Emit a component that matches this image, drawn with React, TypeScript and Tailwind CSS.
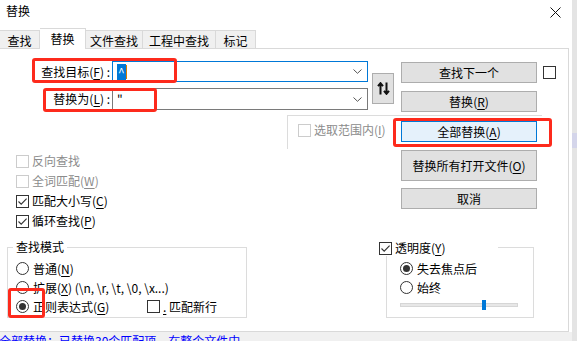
import React from "react";

const Acc: React.FC<{ k: string }> = ({ k }) => (
	<span>
		(<span className="underline decoration-1 underline-offset-[2px]">{k}</span>)
	</span>
);

const Box: React.FC<{ checked?: boolean; disabled?: boolean }> = ({ checked, disabled }) => (
	<span
		className={`flex h-[13px] w-[13px] shrink-0 items-center justify-center border bg-white ${
			disabled ? "border-[#cccccc]" : "border-[#333333]"
		}`}
	>
		{checked && (
			<svg width="11" height="11" viewBox="0 0 11 11">
				<path d="M1.5 5.5 L4.2 8.2 L9.6 2.6" fill="none" stroke="#333" strokeWidth="1.1" />
			</svg>
		)}
	</span>
);

const Radio: React.FC<{ checked?: boolean }> = ({ checked }) => (
	<span className="flex h-[13px] w-[13px] shrink-0 items-center justify-center rounded-full border border-[#333333] bg-white">
		{checked && <span className="h-[7px] w-[7px] rounded-full bg-[#333333]" />}
	</span>
);

const Chevron = () => (
	<svg width="9" height="5" viewBox="0 0 9 5" className="mr-[5px]">
		<path d="M0.5 0.5 L4.5 4.3 L8.5 0.5" fill="none" stroke="#555" strokeWidth="1" />
	</svg>
);

const Btn: React.FC<{ children: React.ReactNode; className: string }> = ({ children, className }) => (
	<div className={`flex w-[136px] items-center justify-center border ${className}`}>{children}</div>
);

const CheckRow: React.FC<{ checked?: boolean; disabled?: boolean; children: React.ReactNode }> = ({
	checked,
	disabled,
	children,
}) => (
	<div className={`flex h-[20px] items-center gap-[3px] ${disabled ? "text-[#8c8c8c]" : ""}`}>
		<Box checked={checked} disabled={disabled} />
		<span>{children}</span>
	</div>
);

const RadioRow: React.FC<{ checked?: boolean; children: React.ReactNode }> = ({ checked, children }) => (
	<div className="flex h-[19px] items-center gap-[4px]">
		<Radio checked={checked} />
		<span>{children}</span>
	</div>
);

const App: React.FC = () => {
	return (
		<div className="relative h-[341px] w-[577px] overflow-hidden bg-white text-[12px] leading-[16px] text-black font-['Noto_Sans_CJK_SC','Microsoft_YaHei',sans-serif]">
			{/* title bar */}
			<div className="flex h-[28px] w-[569px] items-start justify-between">
				<span className="ml-[6px] mt-[3px]">替换</span>
				<svg width="11" height="11" viewBox="0 0 11 11" className="mr-[8px] mt-[7px]">
					<path d="M0.5 0.5 L10.5 10.5 M10.5 0.5 L0.5 10.5" stroke="#111" strokeWidth="1" />
				</svg>
			</div>

			{/* tabs */}
			<div className="flex h-[20px] items-end">
				<div className="flex h-[18px] w-[40px] items-center justify-center border-t border-r border-[#d9d9d9] bg-[#f0f0f0] pt-[2px]">
					查找
				</div>
				<div className="relative z-10 -mb-px flex h-[21px] w-[46px] items-start justify-center border-t border-r border-[#d9d9d9] bg-white pt-[2px]">
					替换
				</div>
				<div className="flex h-[18px] w-[57px] items-center justify-center border-t border-r border-[#d9d9d9] bg-[#f0f0f0] pt-[2px]">
					文件查找
				</div>
				<div className="flex h-[18px] w-[73px] items-center justify-center border-t border-r border-[#d9d9d9] bg-[#f0f0f0] pt-[2px]">
					工程中查找
				</div>
				<div className="flex h-[18px] w-[40px] items-center justify-center border-t border-r border-[#d9d9d9] bg-[#f0f0f0] pt-[2px]">
					标记
				</div>
			</div>

			{/* panel */}
			<div className="relative h-[284px] w-[569px] border-t border-r border-b border-[#d9d9d9]">
				<div className="flex">
					{/* left block */}
					<div className="w-[401px]">
						<div className="mt-[12px] flex">
							<div className="flex flex-col gap-[6px]">
								<div className="flex h-[21px] items-center">
									<span className="w-[112px] pr-[2px] text-right">
										查找目标<Acc k="F" /> :
									</span>
									<div className="flex h-[21px] w-[256px] items-center justify-between border border-[#0078d7]">
										<div className="ml-[4px] flex items-center">
											<span className="bg-[#0078d7] px-[1px] text-white">^</span>
											<span className="h-[14px] w-[1px] bg-[#d87a00]" />
										</div>
										<Chevron />
									</div>
								</div>
								<div className="flex h-[22px] items-center">
									<span className="w-[112px] pr-[2px] text-right">
										替换为<Acc k="L" /> :
									</span>
									<div className="flex h-[22px] w-[256px] items-center justify-between border border-[#7a7a7a]">
										<span className="ml-[4px]">"</span>
										<Chevron />
									</div>
								</div>
							</div>
							<div className="ml-[4px] mt-[12px] flex h-[31px] w-[22px] items-center justify-center border border-[#adadad] bg-[#e1e1e1]">
								<svg width="13" height="13" viewBox="0 0 13 13">
									<path
										d="M3.5 12.5 V1.5 M1 4.2 L3.5 1.2 L6 4.2 M9.5 0.5 V11.5 M7 8.8 L9.5 11.8 L12 8.8"
										fill="none"
										stroke="#111"
										strokeWidth="2"
									/>
								</svg>
							</div>
						</div>

						<div className="mt-[12px] flex h-[16px] items-center gap-[3px] pl-[298px] text-[#8c8c8c]">
							<Box disabled />
							<span>
								选取范围内<Acc k="I" />
							</span>
						</div>

						<div className="mt-[13px] flex flex-col pl-[16px]">
							<CheckRow disabled>反向查找</CheckRow>
							<CheckRow disabled>
								全词匹配<Acc k="W" />
							</CheckRow>
							<CheckRow checked>
								匹配大小写<Acc k="C" />
							</CheckRow>
							<CheckRow checked>
								循环查找<Acc k="P" />
							</CheckRow>
						</div>
					</div>

					{/* right buttons */}
					<div className="mt-[13px] flex flex-col">
						<Btn className="h-[21px] border-[#adadad] bg-[#e1e1e1]">查找下一个</Btn>
						<Btn className="mt-[8px] h-[21px] border-[#adadad] bg-[#e1e1e1]">
							<span>
								替换<Acc k="R" />
							</span>
						</Btn>
						<Btn className="mt-[9px] h-[21px] border-[#0078d7] bg-[#e5f1fb]">
							<span>
								全部替换<Acc k="A" />
							</span>
						</Btn>
						<Btn className="mt-[8px] h-[31px] border-[#adadad] bg-[#e1e1e1]">
							<span>
								替换所有打开文件<Acc k="O" />
							</span>
						</Btn>
						<Btn className="mt-[7px] h-[21px] border-[#adadad] bg-[#e1e1e1]">取消</Btn>
					</div>

					<div className="ml-[6px] mt-[17px]">
						<Box />
					</div>
				</div>

				{/* selection group frame */}
				<div className="absolute left-[287px] top-[66px] h-[34px] w-[255px] border-t border-l border-[#dcdcdc]" />

				{/* bottom groups */}
				<div className="mt-[16px] flex">
					<div className="relative ml-[7px] h-[71px] w-[240px] border border-[#dcdcdc] pl-[8px] pt-[11px]">
						<span className="absolute -top-[9px] left-[5px] bg-white px-[3px]">查找模式</span>
						<RadioRow>
							普通<Acc k="N" />
						</RadioRow>
						<RadioRow>
							扩展<Acc k="X" /> (\n, \r, \t, \0, \x...)
						</RadioRow>
						<div className="flex items-center">
							<div className="w-[131px]">
								<RadioRow checked>
									正则表达式<Acc k="G" />
								</RadioRow>
							</div>
							<Box />
							<span className="ml-[3px]">
								<span className="underline decoration-1 underline-offset-[2px]">.</span> 匹配新行
							</span>
						</div>
					</div>

					<div className="relative ml-[139px] h-[71px] w-[148px] border border-[#dcdcdc] pl-[13px] pt-[11px]">
						<div className="absolute -left-[8px] -top-[8px] flex items-center gap-[3px] bg-white pr-[52px]">
							<Box checked />
							<span>
								透明度<Acc k="Y" />
							</span>
						</div>
						<RadioRow checked>失去焦点后</RadioRow>
						<RadioRow>始终</RadioRow>
						<div className="relative mt-[6px] h-[4px] w-[118px] border border-[#d6d6d6] bg-[#e7e7e7]">
							<span className="absolute -top-[4px] left-[81px] h-[10px] w-[4px] bg-[#0078d7]" />
						</div>
					</div>
				</div>
			</div>

			{/* status bar */}
			<div className="h-[10px] w-[572px] overflow-visible bg-[#f0f0f0]">
				<span className="-ml-[1px] block pt-[1px] text-[#0000ff]">全部替换：已替换30个匹配项，在整个文件中</span>
			</div>

			{/* screen edge */}
			<div className="absolute right-0 top-0 h-[341px] w-[5px] bg-[#e4e4e4]" />
			<div className="absolute right-0 top-[133px] h-[15px] w-[5px] bg-[#d4d5ea]" />

			{/* annotation boxes */}
			<div className="absolute left-[32px] top-[58px] h-[25px] w-[145px] rounded-[3px] border-[3px] border-[#fd2a1c]" />
			<div className="absolute left-[43px] top-[88px] h-[24px] w-[114px] rounded-[3px] border-[3px] border-[#fd2a1c]" />
			<div className="absolute left-[393px] top-[118px] h-[29px] w-[159px] rounded-[3px] border-[3px] border-[#fd2a1c]" />
			<div className="absolute left-[8px] top-[288px] h-[30px] w-[37px] rounded-[3px] border-[3px] border-[#fd2a1c]" />
		</div>
	);
};

export default App;
